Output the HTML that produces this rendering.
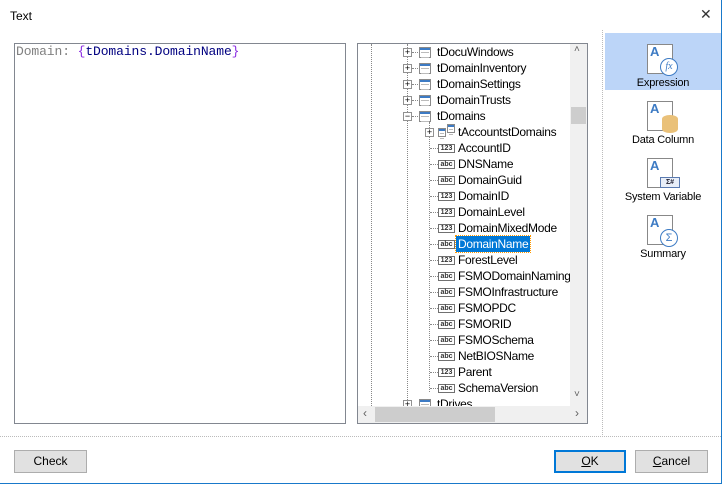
<!DOCTYPE html>
<html><head><style>
*{margin:0;padding:0;box-sizing:border-box}
body{width:722px;height:484px;background:#fff;font-family:"Liberation Sans",sans-serif;font-size:12px;color:#000;position:relative;overflow:hidden}
.a{position:absolute}
.row{position:absolute;height:16px;line-height:17px;white-space:nowrap;letter-spacing:-0.3px}
.pm{position:absolute;width:9px;height:9px;border:1px solid #919191;background:#fff;font-size:9px;line-height:7px;text-align:center;color:#000}
.tb{position:absolute;width:12px;height:11px;border:1px solid #8a8a8a;background:#fff}
.tb:before{content:"";position:absolute;left:0;right:0;top:0;height:2px;background:#3d7bc4}
.tb:after{content:"";position:absolute;left:1px;right:1px;top:4px;height:4px;border-top:1px solid #bbb;border-bottom:1px solid #bbb}
.fi{position:absolute;width:17px;height:9px;border:1px solid #707070;font-size:7px;line-height:7px;text-align:center;color:#333;font-weight:bold;background:#fff}
.dl{position:absolute;border-left:1px dotted #888}
.dh{position:absolute;border-top:1px dotted #888;height:0}
.btn{position:absolute;height:23px;border:1px solid #adadad;background:#e1e1e1;text-align:center;line-height:21px;font-size:12px}
.ic{position:absolute;width:26px;height:30px;border:1px solid #888;background:#fff}
.lab{position:absolute;width:118px;text-align:center;font-size:11px;letter-spacing:-0.2px}
</style></head><body>
<div class="a" style="left:10px;top:9px;font-size:12px">Text</div>
<div class="a" style="left:700px;top:6px;font-size:14px;color:#333">✕</div>
<div class="a" style="right:0;top:0;width:1px;height:484px;background:#1979ca"></div>
<div class="a" style="left:0;bottom:0;width:722px;height:1px;background:#1979ca"></div>

<div class="a" style="left:14px;top:43px;width:332px;height:381px;border:1px solid #828790"></div>
<div class="a" style="left:16px;top:44px;font-family:'Liberation Mono',monospace;font-size:13px;line-height:16px;white-space:pre;letter-spacing:-0.1px"><span style="color:#808080">Domain: </span><span style="color:#8a2be2">{</span><span style="color:#000080">tDomains.DomainName</span><span style="color:#8a2be2">}</span></div>

<div class="a" style="left:357px;top:43px;width:231px;height:381px;border:1px solid #828790;overflow:hidden">
<div class="a" style="left:0;top:0;width:229px;height:379px">
<div class="dl" style="left:13px;top:0;height:364px"></div>
<div class="dl" style="left:49px;top:0;height:364px"></div>
<div class="dl" style="left:71px;top:78px;height:270px"></div>
</div>
</div>
<div id="tree" class="a" style="left:358px;top:44px;width:212px;height:362px;overflow:hidden"></div>
<div class="a" style="left:570px;top:44px;width:17px;height:362px;background:#f0f0f0"></div>
<div class="a" style="left:571px;top:107px;width:15px;height:17px;background:#cdcdcd"></div>
<div class="a" style="left:574px;top:44px;font-size:10px;color:#606060">˄</div>
<div class="a" style="left:574px;top:389px;font-size:10px;color:#606060">˅</div>
<div class="a" style="left:358px;top:406px;width:229px;height:17px;background:#f0f0f0"></div>
<div class="a" style="left:375px;top:407px;width:120px;height:15px;background:#cdcdcd"></div>
<div class="a" style="left:363px;top:406px;font-size:12px;color:#606060">‹</div>
<div class="a" style="left:575px;top:406px;font-size:12px;color:#606060">›</div>

<div class="a" style="left:602px;top:30px;height:405px;border-left:1px dotted #bbb"></div>
<div class="a" style="left:605px;top:33px;width:116px;height:57px;background:#bcd5f8"></div>
<div class="ic" style="left:647px;top:44px"></div><div class="a" style="left:650px;top:44px;color:#3d7bc4;font-size:13px;font-weight:bold">A</div>
<div class="a" style="left:660px;top:58px;width:18px;height:18px;border:1px solid #3d7bc4;border-radius:50%;background:#fff;font-style:italic;font-size:10px;text-align:center;line-height:15px;color:#3d7bc4;font-family:'Liberation Serif',serif">fx</div>
<div class="lab" style="left:604px;top:77px">Expression</div>
<div class="ic" style="left:647px;top:101px"></div><div class="a" style="left:650px;top:101px;color:#3d7bc4;font-size:13px;font-weight:bold">A</div>
<div class="a" style="left:662px;top:115px;width:16px;height:18px;background:#eac179;border-radius:8px/4px"></div>
<div class="lab" style="left:604px;top:134px">Data Column</div>
<div class="ic" style="left:647px;top:158px"></div><div class="a" style="left:650px;top:158px;color:#3d7bc4;font-size:13px;font-weight:bold">A</div>
<div class="a" style="left:660px;top:177px;width:20px;height:11px;background:#e8eef8;border:1px solid #5a7ab0;font-size:7px;line-height:9px;text-align:center;font-weight:bold;color:#223">Σ#</div>
<div class="lab" style="left:604px;top:191px">System Variable</div>
<div class="ic" style="left:647px;top:215px"></div><div class="a" style="left:650px;top:215px;color:#3d7bc4;font-size:13px;font-weight:bold">A</div>
<div class="a" style="left:660px;top:229px;width:18px;height:18px;border:1px solid #3d7bc4;border-radius:50%;background:#fff;font-size:11px;text-align:center;line-height:16px;color:#3d7bc4">Σ</div>
<div class="lab" style="left:604px;top:248px">Summary</div>

<div class="a" style="left:0;top:436px;width:721px;border-top:1px dotted #bbb"></div>
<div class="btn" style="left:14px;top:450px;width:73px">Check</div>
<div class="btn" style="left:554px;top:450px;width:72px;border:2px solid #0078d7;line-height:19px"><u>O</u>K</div>
<div class="btn" style="left:635px;top:450px;width:73px"><u>C</u>ancel</div>

<script>
var t=document.getElementById('tree'),h='';
var tops=['tDocuWindows','tDomainInventory','tDomainSettings','tDomainTrusts'];
tops.forEach(function(n,i){var y=i*16;h+='<div class="pm" style="left:45px;top:'+(y+4)+'px">+</div><div class="dh" style="left:54px;top:'+(y+8)+'px;width:6px"></div><div class="tb" style="left:61px;top:'+(y+3)+'px"></div><div class="row" style="left:79px;top:'+y+'px">'+n+'</div>';});
h+='<div class="pm" style="left:45px;top:68px">−</div><div class="dh" style="left:54px;top:72px;width:6px"></div><div class="tb" style="left:61px;top:67px"></div><div class="row" style="left:79px;top:64px">tDomains</div>';
h+='<div class="pm" style="left:67px;top:84px">+</div><div class="tb" style="left:80px;top:84px;width:8px;height:9px"></div><div class="tb" style="left:89px;top:80px;width:8px;height:9px"></div><div class="row" style="left:100px;top:80px">tAccountstDomains</div>';
var f=[['AccountID',1],['DNSName',0],['DomainGuid',0],['DomainID',1],['DomainLevel',1],['DomainMixedMode',1],['DomainName',0],['ForestLevel',1],['FSMODomainNaming',0],['FSMOInfrastructure',0],['FSMOPDC',0],['FSMORID',0],['FSMOSchema',0],['NetBIOSName',0],['Parent',1],['SchemaVersion',0]];
f.forEach(function(a,i){var y=96+i*16;h+='<div class="dh" style="left:72px;top:'+(y+8)+'px;width:8px"></div><div class="fi" style="left:80px;top:'+(y+4)+'px">'+(a[1]?'123':'abc')+'</div>';
var s=a[0]=='DomainName'?'background:#0078d7;color:#fff;padding:0 2px;left:98px;outline:1px dotted #f90':'left:100px';
h+='<div class="row" style="top:'+y+'px;'+s+'">'+a[0]+'</div>';});
h+='<div class="pm" style="left:45px;top:356px">+</div><div class="tb" style="left:61px;top:355px"></div><div class="row" style="left:79px;top:352px">tDrives</div>';
t.innerHTML=h;
</script>
</body></html>
